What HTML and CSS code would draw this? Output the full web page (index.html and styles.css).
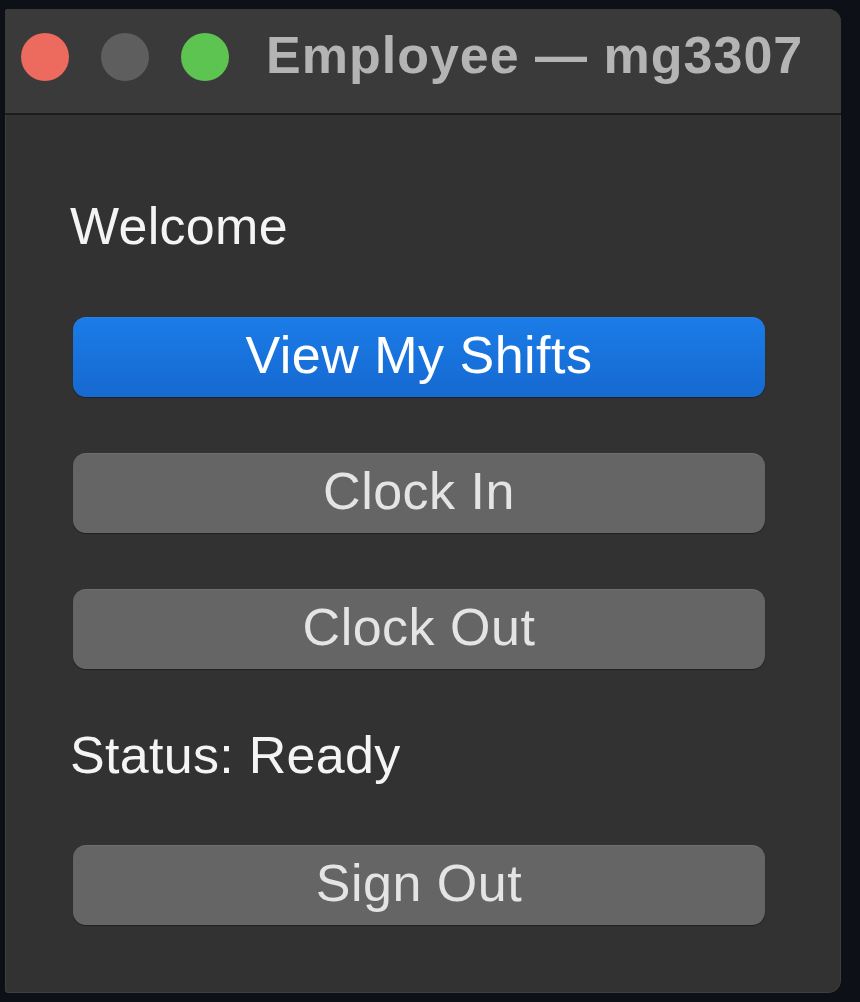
FILE: index.html
```html
<!DOCTYPE html>
<html lang="en">
<head>
<meta charset="utf-8">
<title>Employee — mg3307</title>
<link rel="stylesheet" href="styles.css">
</head>
<body>
<div class="window">
  <div class="titlebar">
    <div class="lights">
      <span class="light red"></span>
      <span class="light gray"></span>
      <span class="light green"></span>
    </div>
    <div class="title">Employee — mg3307</div>
  </div>
  <div class="content">
    <div class="label welcome">Welcome</div>
    <button class="btn primary btn-first">View My Shifts</button>
    <button class="btn">Clock In</button>
    <button class="btn">Clock Out</button>
    <div class="label status">Status: Ready</div>
    <button class="btn signout">Sign Out</button>
  </div>
</div>
</body>
</html>
```

FILE: styles.css
```css
html, body {
  margin: 0;
  padding: 0;
  background: #0d1117;
}

body {
  width: 860px;
  height: 1002px;
  overflow: hidden;
  font-family: "Liberation Sans", Arial, Helvetica, sans-serif;
}

.window {
  margin: 9px 0 0 5px;
  width: 836px;
  height: 984px;
  background: #323232;
  border-radius: 3px 13px 13px 3px;
  overflow: hidden;
  display: flex;
  flex-direction: column;
  box-shadow: inset 0 0 0 1px rgba(255, 255, 255, 0.06);
}

.titlebar {
  height: 104px;
  flex: none;
  background: #3a3a3a;
  border-bottom: 2px solid #1c1c1c;
  display: flex;
  align-items: flex-start;
  padding-left: 16px;
  box-sizing: content-box;
}

.lights {
  display: flex;
  gap: 32px;
  padding-top: 24px;
}

.light {
  width: 48px;
  height: 48px;
  border-radius: 50%;
  display: block;
}

.red { background: #ec6a5e; }
.gray { background: #5e5e5e; }
.green { background: #5dc452; }

.title {
  margin-left: 37px;
  margin-top: 20px;
  font-size: 52px;
  line-height: 52px;
  font-weight: bold;
  letter-spacing: 1px;
  color: #b4b4b4;
  white-space: nowrap;
}

.content {
  display: flex;
  flex-direction: column;
  padding: 85px 76px 0 68px;
}

.label {
  font-size: 52px;
  line-height: 52px;
  color: #f4f4f4;
  margin-left: -3px;
  letter-spacing: 0.3px;
  white-space: nowrap;
}

.btn {
  height: 80px;
  width: 100%;
  border: none;
  border-radius: 13px;
  background: #656565;
  color: #e4e4e4;
  font-family: inherit;
  font-size: 52px;
  line-height: 52px;
  letter-spacing: 0.5px;
  padding: 0 0 5px;
  margin: 56px 0 0;
  display: flex;
  align-items: center;
  justify-content: center;
  box-shadow: 0 1px 1px rgba(0, 0, 0, 0.35), inset 0 1px 0 rgba(255, 255, 255, 0.06);
}

.btn.primary {
  background: linear-gradient(#1b7ce8, #1669d0);
  color: #ffffff;
}

.btn-first {
  margin-top: 65px;
}

.status {
  margin-top: 60px;
}

.signout {
  margin-top: 64px;
}
```
